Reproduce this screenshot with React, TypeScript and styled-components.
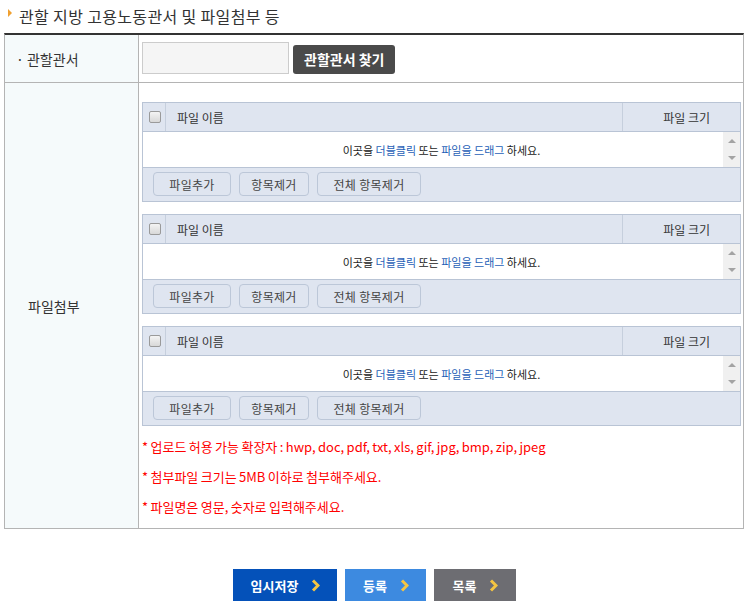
import React from 'react';
import styled, { createGlobalStyle } from 'styled-components';

const GlobalStyle = createGlobalStyle`
  html, body {
    margin: 0;
    padding: 0;
    background: #fff;
  }
  body {
    font-family: 'Noto Sans CJK KR', 'Noto Sans', sans-serif;
    color: #333;
  }
  * {
    box-sizing: border-box;
  }
`;

const Page = styled.div`
  width: 748px;
  padding: 0 4px;
`;

const TitleRow = styled.h3`
  margin: 0;
  height: 33px;
  display: flex;
  align-items: center;
  gap: 7px;
  padding-left: 4px;
  padding-bottom: 2px;
  font-size: 16px;
  font-weight: 400;
  color: #333;
  letter-spacing: 0.35px;
`;

const Marker = styled.span`
  width: 0;
  height: 0;
  border-top: 4px solid transparent;
  border-bottom: 4px solid transparent;
  border-left: 4px solid #f0a030;
  margin-top: -6px;
`;

const FormTable = styled.div`
  border-top: 2px solid #333;
  border-left: 1px solid #b4b4b4;
  border-right: 1px solid #b4b4b4;
  border-bottom: 1px solid #b4b4b4;
`;

const Row = styled.div<{ $last?: boolean }>`
  display: grid;
  grid-template-columns: 134px 1fr;
  border-bottom: ${({ $last }) => ($last ? 'none' : '1px solid #b4b4b4')};
`;

const Label = styled.div<{ $indent?: boolean }>`
  background: #f5fafb;
  border-right: 1px solid #b4b4b4;
  display: flex;
  align-items: center;
  padding-left: ${({ $indent }) => ($indent ? '23px' : '11px')};
  font-size: 14px;
  color: #333;
`;

const Cell = styled.div<{ $tall?: boolean }>`
  display: flex;
  flex-direction: ${({ $tall }) => ($tall ? 'column' : 'row')};
  align-items: ${({ $tall }) => ($tall ? 'stretch' : 'center')};
  gap: ${({ $tall }) => ($tall ? '0' : '4px')};
  height: ${({ $tall }) => ($tall ? 'auto' : '47px')};
  padding: ${({ $tall }) => ($tall ? '19px 2px 6px 3px' : '0 3px')};
`;

const TextInput = styled.input`
  width: 147px;
  height: 32px;
  margin-top: -2px;
  border: 1px solid #ccc;
  background: #f5f5f5;
  outline: none;
`;

const DarkButton = styled.button`
  height: 29px;
  padding: 0 11px;
  margin-top: 1px;
  border: none;
  border-radius: 3px;
  background: #4a4a4a;
  color: #fff;
  font-family: inherit;
  font-size: 14px;
  font-weight: 700;
  cursor: pointer;
`;

const FileBox = styled.div`
  border: 1px solid #b9c4d5;
  margin-bottom: 12px;
  font-size: 12px;
`;

const FileHead = styled.div`
  display: grid;
  grid-template-columns: 23px 1fr 117px;
  height: 29px;
  background: #dfe5f0;
  border-bottom: 1px solid #b9c4d5;
`;

const HeadCell = styled.div<{ $align?: 'left' | 'right' | 'center' }>`
  display: flex;
  align-items: center;
  justify-content: ${({ $align }) =>
    $align === 'right' ? 'flex-end' : $align === 'center' ? 'center' : 'flex-start'};
  padding: ${({ $align }) =>
    $align === 'right' ? '0 30px 0 0' : $align === 'center' ? '0' : '0 0 0 11px'};
  border-right: ${({ $align }) => ($align === 'right' ? 'none' : '1px solid #c6cfdd')};
  color: #333;
`;

const Check = styled.span`
  width: 12px;
  height: 12px;
  margin-left: 1px;
  border: 1px solid #9a9a9a;
  border-radius: 2px;
  background: linear-gradient(#f4f4f4, #d8d8d8);
`;

const DropArea = styled.div`
  position: relative;
  height: 36px;
  background: #fff;
  border-bottom: 1px solid #b9c4d5;
  display: flex;
  align-items: center;
  justify-content: center;
  padding-top: 1px;
  font-size: 11px;
  color: #222;
`;

const Link = styled.span`
  color: #1f5fb7;
`;

const ScrollBar = styled.div`
  position: absolute;
  top: 0;
  right: 0;
  bottom: 0;
  width: 17px;
  background: #f0f0f0;
  display: flex;
  flex-direction: column;
  align-items: center;
  justify-content: space-between;
  padding: 7px 0 7px;
`;

const Arrow = styled.span<{ $down?: boolean }>`
  width: 0;
  height: 0;
  border-left: 4px solid transparent;
  border-right: 4px solid transparent;
  ${({ $down }) =>
    $down ? 'border-top: 4px solid #a3a3a3;' : 'border-bottom: 4px solid #a3a3a3;'}
`;

const FileFoot = styled.div`
  height: 33px;
  background: #dfe5f0;
  display: flex;
  align-items: center;
  gap: 8px;
  padding: 0 0 1px 10px;
`;

const SmallButton = styled.button<{ $width: number }>`
  width: ${({ $width }) => $width}px;
  height: 24px;
  padding: 0;
  border: 1px solid #bcc7d8;
  border-radius: 4px;
  background: #dfe5f0;
  color: #444;
  font-family: inherit;
  font-size: 12px;
  letter-spacing: 0.3px;
  cursor: pointer;
`;

const Notes = styled.ul`
  list-style: none;
  margin: -6px 0 0;
  padding: 0;
`;

const Note = styled.li`
  height: 30px;
  line-height: 30px;
  font-size: 13px;
  letter-spacing: 0px;
  word-spacing: -0.5px;
  color: #ff0000;
`;

const Actions = styled.div`
  display: flex;
  justify-content: center;
  gap: 8px;
  margin-top: 40px;
`;

const ActionButton = styled.button<{ $color: string; $width: number }>`
  width: ${({ $width }) => $width}px;
  height: 32px;
  border: none;
  background: ${({ $color }) => $color};
  color: #fff;
  display: flex;
  align-items: center;
  justify-content: center;
  gap: 13px;
  padding: 0 0 0 2px;
  font-family: inherit;
  font-size: 13px;
  font-weight: 700;
  cursor: pointer;
`;

const Chevron = () => (
  <svg width="9" height="13" viewBox="0 0 9 13">
    <polyline
      points="2,1.5 7,6.5 2,11.5"
      fill="none"
      stroke="#f5c542"
      strokeWidth="3"
    />
  </svg>
);

const FileUploader = () => (
  <FileBox>
    <FileHead>
      <HeadCell $align="center">
        <Check />
      </HeadCell>
      <HeadCell>파일 이름</HeadCell>
      <HeadCell $align="right">파일 크기</HeadCell>
    </FileHead>
    <DropArea>
      <span>
        이곳을 <Link>더블클릭</Link> 또는 <Link>파일을 드래그</Link> 하세요.
      </span>
      <ScrollBar>
        <Arrow />
        <Arrow $down />
      </ScrollBar>
    </DropArea>
    <FileFoot>
      <SmallButton $width={78}>파일추가</SmallButton>
      <SmallButton $width={70}>항목제거</SmallButton>
      <SmallButton $width={104}>전체 항목제거</SmallButton>
    </FileFoot>
  </FileBox>
);

export default function App() {
  return (
    <Page>
      <GlobalStyle />
      <TitleRow>
        <Marker />
        관할 지방 고용노동관서 및 파일첨부 등
      </TitleRow>
      <FormTable>
        <Row>
          <Label>· 관할관서</Label>
          <Cell>
            <TextInput />
            <DarkButton>관할관서 찾기</DarkButton>
          </Cell>
        </Row>
        <Row $last>
          <Label $indent>파일첨부</Label>
          <Cell $tall>
            <FileUploader />
            <FileUploader />
            <FileUploader />
            <Notes>
              <Note>* 업로드 허용 가능 확장자 : hwp, doc, pdf, txt, xls, gif, jpg, bmp, zip, jpeg</Note>
              <Note>* 첨부파일 크기는 5MB 이하로 첨부해주세요.</Note>
              <Note>* 파일명은 영문, 숫자로 입력해주세요.</Note>
            </Notes>
          </Cell>
        </Row>
      </FormTable>
      <Actions>
        <ActionButton $color="#0451b9" $width={104}>
          임시저장 <Chevron />
        </ActionButton>
        <ActionButton $color="#3d8ae0" $width={81}>
          등록 <Chevron />
        </ActionButton>
        <ActionButton $color="#6d6d72" $width={82}>
          목록 <Chevron />
        </ActionButton>
      </Actions>
    </Page>
  );
}
